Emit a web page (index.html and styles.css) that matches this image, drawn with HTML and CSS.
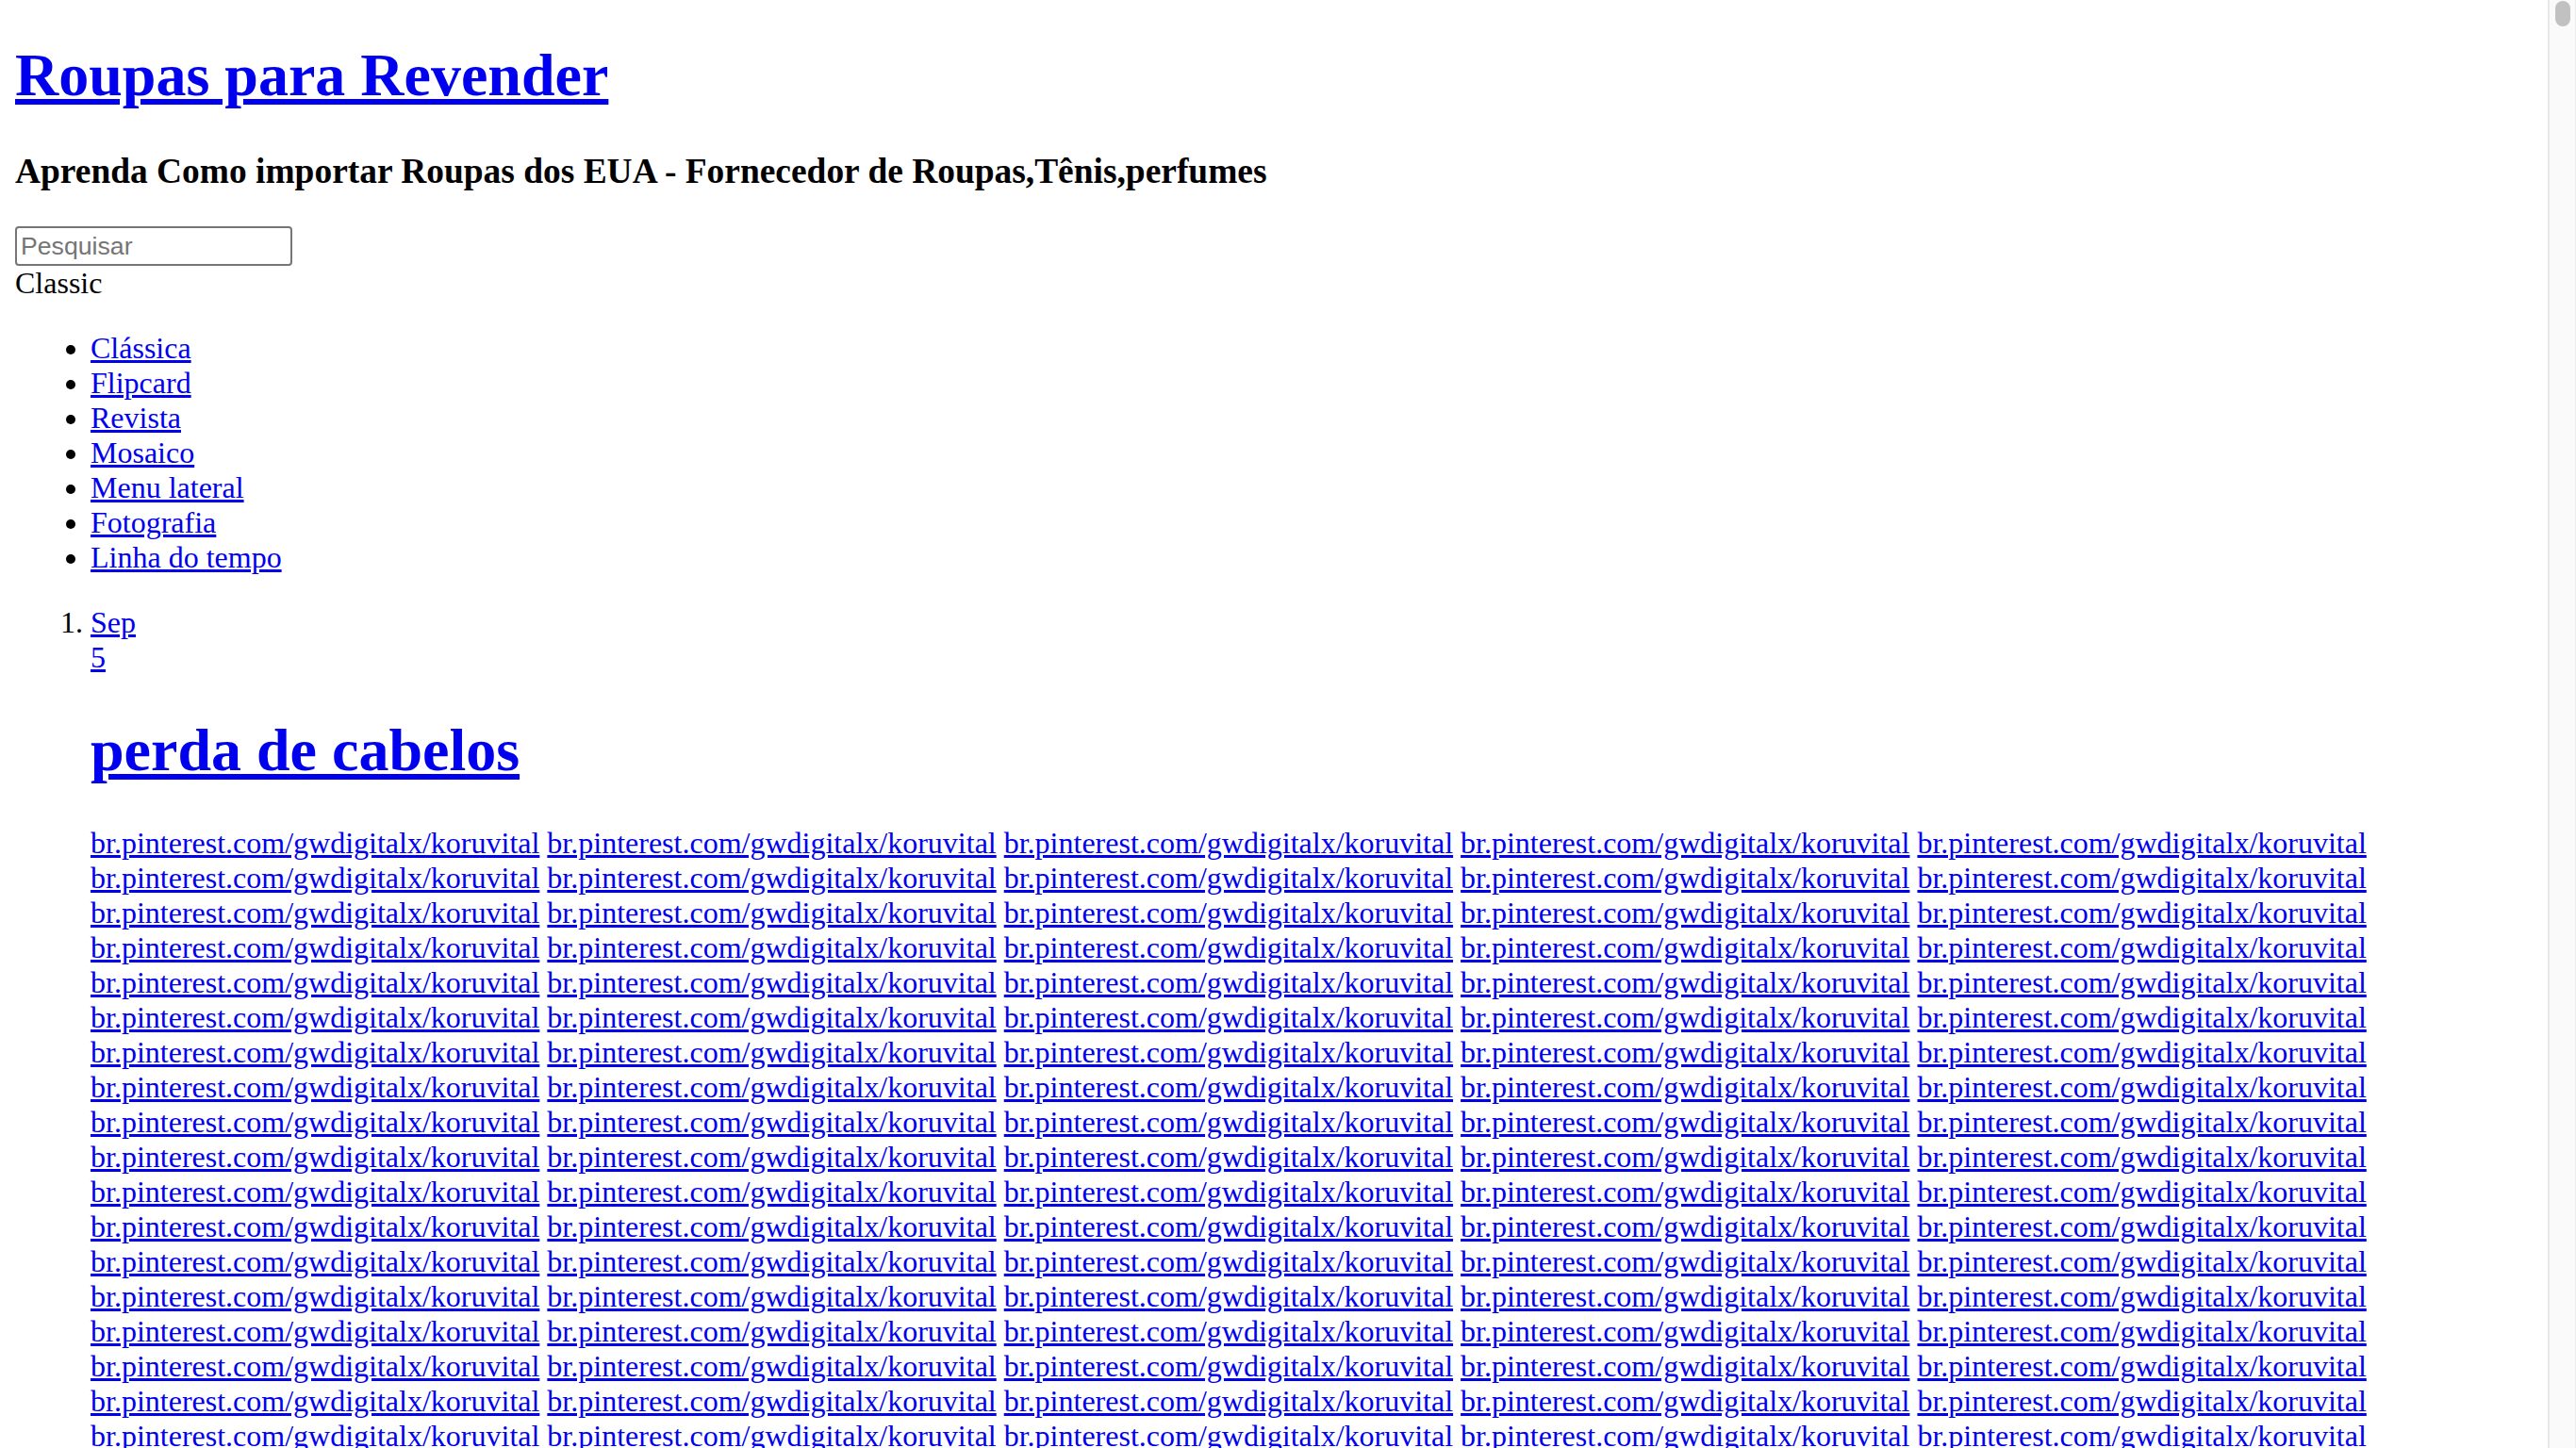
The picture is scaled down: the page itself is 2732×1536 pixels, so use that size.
FILE: index.html
```html
<!DOCTYPE html>
<html lang="pt-BR">
<head>
<meta charset="utf-8">
<title>Roupas para Revender</title>
<link rel="stylesheet" href="styles.css">
</head>
<body class="page">
  <h1 class="blog-title"><a class="link" href="#">Roupas para Revender</a></h1>
  <h3 class="blog-desc">Aprenda Como importar Roupas dos EUA - Fornecedor de Roupas,Tênis,perfumes</h3>
  <form class="search">
    <input class="search-input" type="text" placeholder="Pesquisar">
  </form>
  <div class="view-label">Classic</div>
  <ul class="views">
    <li><a class="link" href="#">Clássica</a></li>
    <li><a class="link" href="#">Flipcard</a></li>
    <li><a class="link" href="#">Revista</a></li>
    <li><a class="link" href="#">Mosaico</a></li>
    <li><a class="link" href="#">Menu lateral</a></li>
    <li><a class="link" href="#">Fotografia</a></li>
    <li><a class="link" href="#">Linha do tempo</a></li>
  </ul>
  <ol class="posts">
    <li class="post">
      <a class="link post-date" href="#"><span class="month">Sep</span><span class="day">5</span></a>
      <h1 class="post-title"><a class="link" href="#">perda de cabelos</a></h1>
      <div class="post-body" id="links"></div>
    </li>
  </ol>
  <div class="scrollbar" aria-hidden="true"><div class="scroll-thumb"></div></div>
  <script src="script.js"></script>
</body>
</html>
```

FILE: styles.css
```css
html {
  background: #fff;
}
.page {
  margin: 16px 46px 16px 16px;
  font-family: "Liberation Serif", "Times New Roman", serif;
  font-size: 32px;
  color: #000;
}
.link {
  color: #0000ee;
  text-decoration: underline;
}
.blog-title {
  font-size: 64px;
  font-weight: bold;
  margin: 27px 0 42.88px;
}
.blog-desc {
  font-size: 37.44px;
  font-weight: bold;
  margin: 37.44px 0;
}
.search {
  margin: 0;
}
.search-input {
  display: block;
  box-sizing: border-box;
  width: 294px;
  height: 42px;
  margin: 0;
  padding: 2px 4px;
  border: 2px solid #767676;
  border-radius: 4px;
  font-family: "Liberation Sans", Arial, sans-serif;
  font-size: 26.67px;
  background: #fff;
}
.search-input::placeholder {
  color: #757575;
}
.views {
  margin: 32px 0;
  padding-left: 80px;
  list-style: disc;
}
.posts {
  margin: 32px 0;
  padding-left: 80px;
}
.month, .day {
  display: block;
}
.post-title {
  font-size: 64px;
  font-weight: bold;
  margin: 42.88px 0;
}
.scrollbar {
  position: fixed;
  top: 0;
  right: 0;
  bottom: 0;
  width: 30px;
  box-sizing: border-box;
  background: #fafafa;
  border-left: 2px solid #e8e8e8;
  border-right: 1px solid #ececec;
}
.scroll-thumb {
  margin: 1px 0 0 6px;
  width: 16px;
  height: 27px;
  border-radius: 8px;
  background: #c1c1c1;
}
```

FILE: script.js
```js
(function () {
  var n = 250;
  var parts = new Array(n);
  for (var i = 0; i < n; i++) {
    parts[i] = '<a class="link" href="#">br.pinterest.com/gwdigitalx/koruvital</a>';
  }
  document.getElementById('links').innerHTML = parts.join(' ');
})();
```
